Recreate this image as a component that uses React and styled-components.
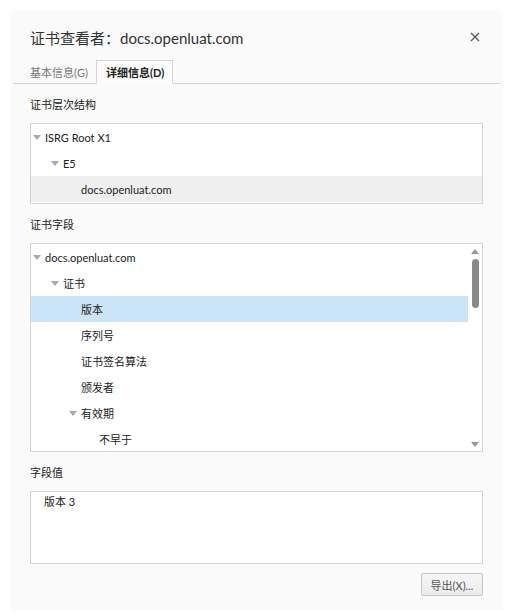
import React from 'react'
import styled, { createGlobalStyle } from 'styled-components'

const GlobalStyle = createGlobalStyle`
  body {
    margin: 0;
    background: #ffffff;
    font-family: Lato, "Noto Sans CJK SC", sans-serif;
    color: #222;
  }
`

const Dialog = styled.div`
  margin: 12px 0 0 13px;
  width: 487px;
  height: 598px;
  background: #fafafa;
  box-shadow: 0 0 6px rgba(0, 0, 0, 0.05);
  display: flex;
  flex-direction: column;
`

const Header = styled.div`
  height: 48px;
  display: flex;
  align-items: center;
  justify-content: space-between;
  padding: 2px 19px 0 17px;
  box-sizing: border-box;
`

const Title = styled.h1`
  margin: 0;
  font-size: 15px;
  font-weight: 400;
  color: #333;
`

const Close = styled.button`
  border: 0;
  background: none;
  padding: 0;
  width: 12px;
  height: 12px;
  display: flex;
  align-items: center;
  justify-content: center;
  cursor: pointer;
`

const TabBar = styled.div`
  height: 24px;
  display: flex;
  align-items: flex-end;
  padding-left: 17px;
  border-bottom: 1px solid #d4d4d4;
  box-sizing: border-box;
`

const Tab = styled.div`
  height: 24px;
  box-sizing: border-box;
  display: flex;
  align-items: center;
  font-size: 11px;
  margin-bottom: -1px;
  padding: ${(p) => (p.$active ? '0 8px 0 9px' : '0')};
  margin-left: ${(p) => (p.$active ? '8px' : '0')};
  font-weight: ${(p) => (p.$active ? 700 : 400)};
  color: ${(p) => (p.$active ? '#222' : '#777')};
  background: ${(p) => (p.$active ? '#fcfcfc' : 'transparent')};
  border: ${(p) => (p.$active ? '1px solid #d4d4d4' : '0')};
  border-bottom: ${(p) => (p.$active ? '1px solid #fcfcfc' : '0')};
`

const Body = styled.div`
  padding: 0 17px;
  display: flex;
  flex-direction: column;
`

const Label = styled.div`
  margin-top: 14px;
  margin-bottom: 11px;
  font-size: 11px;
  line-height: 14px;
  color: #222;
`

const Box = styled.div`
  position: relative;
  height: ${(p) => p.$h}px;
  background: #fff;
  border: 1px solid #d3d3d3;
  box-sizing: border-box;
  overflow: hidden;
`

const Row = styled.div`
  height: 26px;
  display: flex;
  align-items: center;
  padding-left: ${(p) => 2 + p.$level * 18}px;
  margin-right: ${(p) => (p.$scroll ? 14 : 0)}px;
  font-size: 11px;
  color: #222;
  background: ${(p) =>
    p.$selected ? '#cce4f7' : p.$current ? '#efefef' : 'transparent'};
`

const Arrow = styled.span`
  width: 8px;
  margin-right: 4px;
  display: flex;
  justify-content: center;
  visibility: ${(p) => (p.$hidden ? 'hidden' : 'visible')};
`

const Scrollbar = styled.div`
  position: absolute;
  top: 0;
  right: 0;
  bottom: 0;
  width: 14px;
  display: flex;
  flex-direction: column;
  align-items: center;
`

const ScrollBtn = styled.div`
  height: 14px;
  display: flex;
  align-items: center;
  justify-content: center;
`

const Thumb = styled.div`
  width: 7px;
  height: 49px;
  margin-top: 1px;
  border-radius: 4px;
  background: #8a8a8a;
`

const Track = styled.div`
  flex: 1;
`

const ValueText = styled.div`
  padding: 3px 13px;
  font-size: 11px;
  line-height: 14px;
  color: #222;
`

const Footer = styled.div`
  display: flex;
  justify-content: flex-end;
  margin-top: 9px;
`

const Button = styled.button`
  width: 62px;
  height: 23px;
  padding: 0;
  font-family: inherit;
  font-size: 11px;
  color: #555;
  background: linear-gradient(#f6f6f6, #ececec);
  border: 1px solid #c4c4c4;
  border-radius: 2px;
`

const Tri = ({ up, color = '#a8a8a8' }) => (
  <svg width="8" height="5" viewBox="0 0 8 5">
    <path d={up ? 'M0 5 L4 0 L8 5 Z' : 'M0 0 L8 0 L4 5 Z'} fill={color} />
  </svg>
)

const hierarchy = [
  { text: 'ISRG Root X1', level: 0, open: true },
  { text: 'E5', level: 1, open: true },
  { text: 'docs.openluat.com', level: 2, current: true },
]

const fields = [
  { text: 'docs.openluat.com', level: 0, open: true },
  { text: '证书', level: 1, open: true },
  { text: '版本', level: 2, selected: true },
  { text: '序列号', level: 2 },
  { text: '证书签名算法', level: 2 },
  { text: '颁发者', level: 2 },
  { text: '有效期', level: 2, open: true },
  { text: '不早于', level: 3 },
]

const TreeRow = ({ item, scroll }) => (
  <Row
    $level={item.level}
    $selected={item.selected}
    $current={item.current}
    $scroll={scroll}
  >
    <Arrow $hidden={!item.open}>
      <Tri />
    </Arrow>
    {item.text}
  </Row>
)

export default function App() {
  return (
    <>
      <GlobalStyle />
      <Dialog>
        <Header>
          <Title>证书查看者：docs.openluat.com</Title>
          <Close aria-label="关闭">
            <svg width="10" height="10" viewBox="0 0 10 10">
              <path d="M1 1 L9 9 M9 1 L1 9" stroke="#555" strokeWidth="1.2" />
            </svg>
          </Close>
        </Header>
        <TabBar>
          <Tab>基本信息(G)</Tab>
          <Tab $active>详细信息(D)</Tab>
        </TabBar>
        <Body>
          <Label>证书层次结构</Label>
          <Box $h={81}>
            {hierarchy.map((item) => (
              <TreeRow key={item.text} item={item} />
            ))}
          </Box>
          <Label>证书字段</Label>
          <Box $h={209}>
            {fields.map((item, i) => (
              <TreeRow key={i} item={item} scroll />
            ))}
            <Scrollbar>
              <ScrollBtn>
                <Tri up color="#999" />
              </ScrollBtn>
              <Thumb />
              <Track />
              <ScrollBtn>
                <Tri color="#999" />
              </ScrollBtn>
            </Scrollbar>
          </Box>
          <Label>字段值</Label>
          <Box $h={73}>
            <ValueText>版本 3</ValueText>
          </Box>
          <Footer>
            <Button>导出(X)...</Button>
          </Footer>
        </Body>
      </Dialog>
    </>
  )
}
